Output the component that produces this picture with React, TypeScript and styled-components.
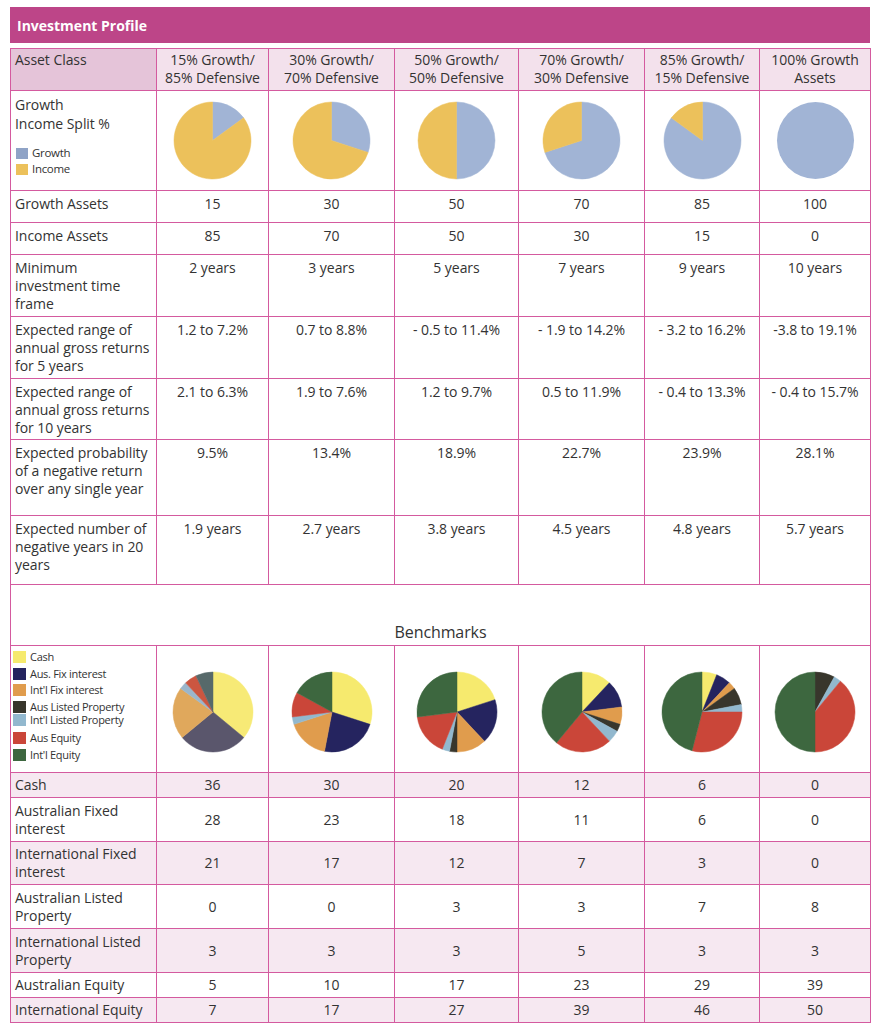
import React from "react";
import styled, { createGlobalStyle } from "styled-components";

const GlobalStyle = createGlobalStyle`
  html, body { margin: 0; padding: 0; background: #ffffff; }
  body { font-family: "Open Sans", "Liberation Sans", sans-serif; color: #333333; }
`;

const BORDER = "#D45A9F";

const Page = styled.div`
  width: 880px;
  padding: 7px 10px 0 10px;
  box-sizing: border-box;
`;

const TitleBar = styled.div`
  height: 36px;
  background: #BD4588;
  color: #ffffff;
  font-weight: 700;
  font-size: 14px;
  letter-spacing: 0;
  display: flex;
  align-items: center;
  padding-left: 7px;
  margin-bottom: 5px;
  width: 860px;
  box-sizing: border-box;
`;

const Table = styled.table`
  width: 860px;
  border-collapse: collapse;
  table-layout: fixed;
  font-size: 14px;
  letter-spacing: -0.05px;
  color: #333333;
`;

const Row = styled.tr<{ $h: number; $shade?: boolean }>`
  height: ${(p) => p.$h}px;
  background: ${(p) => (p.$shade ? "#F6E8F1" : "#ffffff")};
`;

const HeadCell = styled.th<{ $dark?: boolean }>`
  border: 1px solid ${BORDER};
  background: ${(p) => (p.$dark ? "#E5C4D9" : "#F3E1EC")};
  font-weight: 400;
  text-align: ${(p) => (p.$dark ? "left" : "center")};
  vertical-align: top;
  padding: 2px 4px 0 4px;
  line-height: 18px;
`;

const LabelCell = styled.td<{ $middle?: boolean }>`
  border: 1px solid ${BORDER};
  vertical-align: ${(p) => (p.$middle ? "middle" : "top")};
  padding: ${(p) => (p.$middle ? "0 4px" : "4px 4px 0 4px")};
  line-height: 18px;
  text-align: left;
`;

const ValueCell = styled.td<{ $middle?: boolean }>`
  border: 1px solid ${BORDER};
  vertical-align: ${(p) => (p.$middle ? "middle" : "top")};
  padding: ${(p) => (p.$middle ? "0 2px" : "4px 2px 0 2px")};
  line-height: 18px;
  text-align: center;
`;

const PieCell = styled.td<{ $offset?: number }>`
  border: 1px solid ${BORDER};
  text-align: center;
  vertical-align: middle;
  padding: ${(p) => p.$offset ?? 0}px 0 0 0;
  svg { display: block; margin: 0 auto; }
`;

const SplitLabel = styled.div`
  line-height: 19px;
`;

const SmallLegend = styled.div`
  margin-top: 14px;
  padding-left: 1px;
  display: flex;
  flex-direction: column;
  gap: 4px;
`;

const LegendItem = styled.div<{ $gap?: number; $size?: number }>`
  display: flex;
  align-items: center;
  gap: 4px;
  font-size: ${(p) => p.$size ?? 11}px;
  letter-spacing: -0.3px;
  line-height: 12px;
  margin-top: ${(p) => p.$gap ?? 0}px;
`;

const Swatch = styled.span<{ $color: string; $w?: number; $h?: number }>`
  display: inline-block;
  width: ${(p) => p.$w ?? 12}px;
  height: ${(p) => p.$h ?? 11}px;
  background: ${(p) => p.$color};
  flex: none;
`;

const BenchLegendCell = styled.td`
  border: 1px solid ${BORDER};
  vertical-align: top;
  padding: 5px 2px 0 2px;
`;

const BenchLegend = styled.div`
  display: flex;
  flex-direction: column;
`;

const BenchTitleCell = styled.td`
  border: 1px solid ${BORDER};
  text-align: center;
  vertical-align: bottom;
  padding: 0 0 3px 0;
  font-size: 16px;
  line-height: 20px;
  letter-spacing: -0.1px;
`;

type Slice = { value: number; color: string };

function Pie({ slices, r }: { slices: Slice[]; r: number }) {
  const total = slices.reduce((s, x) => s + x.value, 0);
  const size = r * 2 + 2;
  const c = r + 1;
  let angle = -Math.PI / 2;
  const parts: React.ReactNode[] = [];
  slices.forEach((s, i) => {
    if (s.value <= 0) return;
    if (s.value >= total) {
      parts.push(<circle key={i} cx={c} cy={c} r={r} fill={s.color} />);
      return;
    }
    const a = (s.value / total) * Math.PI * 2;
    const x0 = c + r * Math.cos(angle);
    const y0 = c + r * Math.sin(angle);
    const x1 = c + r * Math.cos(angle + a);
    const y1 = c + r * Math.sin(angle + a);
    const large = a > Math.PI ? 1 : 0;
    parts.push(
      <path
        key={i}
        d={`M${c},${c} L${x0},${y0} A${r},${r} 0 ${large} 1 ${x1},${y1} Z`}
        fill={s.color}
        stroke={s.color}
        strokeWidth={0.5}
        strokeLinejoin="round"
      />
    );
    angle += a;
  });
  return (
    <svg width={size} height={size} viewBox={`0 0 ${size} ${size}`}>
      {parts}
    </svg>
  );
}

const GROWTH = "#A1B4D5";
const INCOME = "#ECC15B";

const headers = [
  ["15% Growth/", "85% Defensive"],
  ["30% Growth/", "70% Defensive"],
  ["50% Growth/", "50% Defensive"],
  ["70% Growth/", "30% Defensive"],
  ["85% Growth/", "15% Defensive"],
  ["100% Growth", "Assets"],
];

const growth = [15, 30, 50, 70, 85, 100];

const upperRows: { label: string[]; values: string[]; h: number }[] = [
  { label: ["Growth Assets"], values: ["15", "30", "50", "70", "85", "100"], h: 32 },
  { label: ["Income Assets"], values: ["85", "70", "50", "30", "15", "0"], h: 32 },
  {
    label: ["Minimum", "investment time", "frame"],
    values: ["2 years", "3 years", "5 years", "7 years", "9 years", "10 years"],
    h: 62,
  },
  {
    label: ["Expected range of", "annual gross returns", "for 5 years"],
    values: ["1.2 to 7.2%", "0.7 to 8.8%", "- 0.5 to 11.4%", "- 1.9 to 14.2%", "- 3.2 to 16.2%", "-3.8 to 19.1%"],
    h: 62,
  },
  {
    label: ["Expected range of", "annual gross returns", "for  10 years"],
    values: ["2.1 to 6.3%", "1.9 to 7.6%", "1.2 to 9.7%", "0.5 to 11.9%", "- 0.4 to 13.3%", "- 0.4 to 15.7%"],
    h: 61,
  },
  {
    label: ["Expected probability", "of a negative return", "over any single year"],
    values: ["9.5%", "13.4%", "18.9%", "22.7%", "23.9%", "28.1%"],
    h: 76,
  },
  {
    label: ["Expected number of", "negative years in 20", "years"],
    values: ["1.9 years", "2.7 years", "3.8 years", "4.5 years", "4.8 years", "5.7 years"],
    h: 69,
  },
];

const benchColors = ["#F6EA6E", "#25245F", "#E09C4D", "#38362C", "#92B8CE", "#CA4639", "#3D673F"];
const firstPieColors = ["#F7EA76", "#5A566C", "#E0A85C", "#38362C", "#9BB6CB", "#CB5640", "#57696A"];

const benchLegend = [
  { name: "Cash", gap: 0 },
  { name: "Aus. Fix interest", gap: 5 },
  { name: "Int'l Fix interest", gap: 4 },
  { name: "Aus Listed Property", gap: 5 },
  { name: "Int'l Listed Property", gap: 1 },
  { name: "Aus Equity", gap: 6 },
  { name: "Int'l Equity", gap: 5 },
];

const benchRows: { label: string[]; values: number[]; h: number; shade: boolean }[] = [
  { label: ["Cash"], values: [36, 30, 20, 12, 6, 0], h: 25, shade: true },
  { label: ["Australian Fixed", "interest"], values: [28, 23, 18, 11, 6, 0], h: 44, shade: false },
  { label: ["International Fixed", "interest"], values: [21, 17, 12, 7, 3, 0], h: 43, shade: true },
  { label: ["Australian Listed", "Property"], values: [0, 0, 3, 3, 7, 8], h: 44, shade: false },
  { label: ["International Listed", "Property"], values: [3, 3, 3, 5, 3, 3], h: 44, shade: true },
  { label: ["Australian Equity"], values: [5, 10, 17, 23, 29, 39], h: 25, shade: false },
  { label: ["International Equity"], values: [7, 17, 27, 39, 46, 50], h: 25, shade: true },
];

const colWidths = [146, 112, 126, 124, 126, 115, 111];

export default function App() {
  return (
    <Page>
      <GlobalStyle />
      <TitleBar>Investment Profile</TitleBar>
      <Table>
        <colgroup>
          {colWidths.map((w, i) => (
            <col key={i} style={{ width: w }} />
          ))}
        </colgroup>
        <tbody>
          <Row $h={42}>
            <HeadCell $dark>Asset Class</HeadCell>
            {headers.map((h, i) => (
              <HeadCell key={i}>
                {h[0]}
                <br />
                {h[1]}
              </HeadCell>
            ))}
          </Row>
          <Row $h={100}>
            <LabelCell>
              <SplitLabel>
                Growth
                <br />
                Income Split %
              </SplitLabel>
              <SmallLegend>
                <LegendItem $size={11.5}>
                  <Swatch $color="#8FA3C6" />
                  Growth
                </LegendItem>
                <LegendItem $size={11.5}>
                  <Swatch $color={INCOME} />
                  Income
                </LegendItem>
              </SmallLegend>
            </LabelCell>
            {growth.map((g, i) => (
              <PieCell key={i}>
                <Pie
                  r={38.5}
                  slices={[
                    { value: g, color: GROWTH },
                    { value: 100 - g, color: INCOME },
                  ]}
                />
              </PieCell>
            ))}
          </Row>
          {upperRows.map((r, i) => (
            <Row key={i} $h={r.h}>
              <LabelCell>
                {r.label.map((l, j) => (
                  <React.Fragment key={j}>
                    {j > 0 && <br />}
                    {l}
                  </React.Fragment>
                ))}
              </LabelCell>
              {r.values.map((v, j) => (
                <ValueCell key={j}>{v}</ValueCell>
              ))}
            </Row>
          ))}
          <Row $h={61}>
            <BenchTitleCell colSpan={7}>Benchmarks</BenchTitleCell>
          </Row>
          <Row $h={127}>
            <BenchLegendCell>
              <BenchLegend>
                {benchLegend.map((l, i) => (
                  <LegendItem key={i} $gap={l.gap}>
                    <Swatch $color={benchColors[i]} $w={13} $h={12} />
                    {l.name}
                  </LegendItem>
                ))}
              </BenchLegend>
            </BenchLegendCell>
            {[0, 1, 2, 3, 4, 5].map((c) => (
              <PieCell key={c} $offset={6}>
                <Pie
                  r={40}
                  slices={benchRows.map((b, k) => ({
                    value: b.values[c],
                    color: c === 0 ? firstPieColors[k] : benchColors[k],
                  }))}
                />
              </PieCell>
            ))}
          </Row>
          {benchRows.map((r, i) => (
            <Row key={i} $h={r.h} $shade={r.shade}>
              <LabelCell $middle>
                {r.label.map((l, j) => (
                  <React.Fragment key={j}>
                    {j > 0 && <br />}
                    {l}
                  </React.Fragment>
                ))}
              </LabelCell>
              {r.values.map((v, j) => (
                <ValueCell key={j} $middle>
                  {v}
                </ValueCell>
              ))}
            </Row>
          ))}
        </tbody>
      </Table>
    </Page>
  );
}
